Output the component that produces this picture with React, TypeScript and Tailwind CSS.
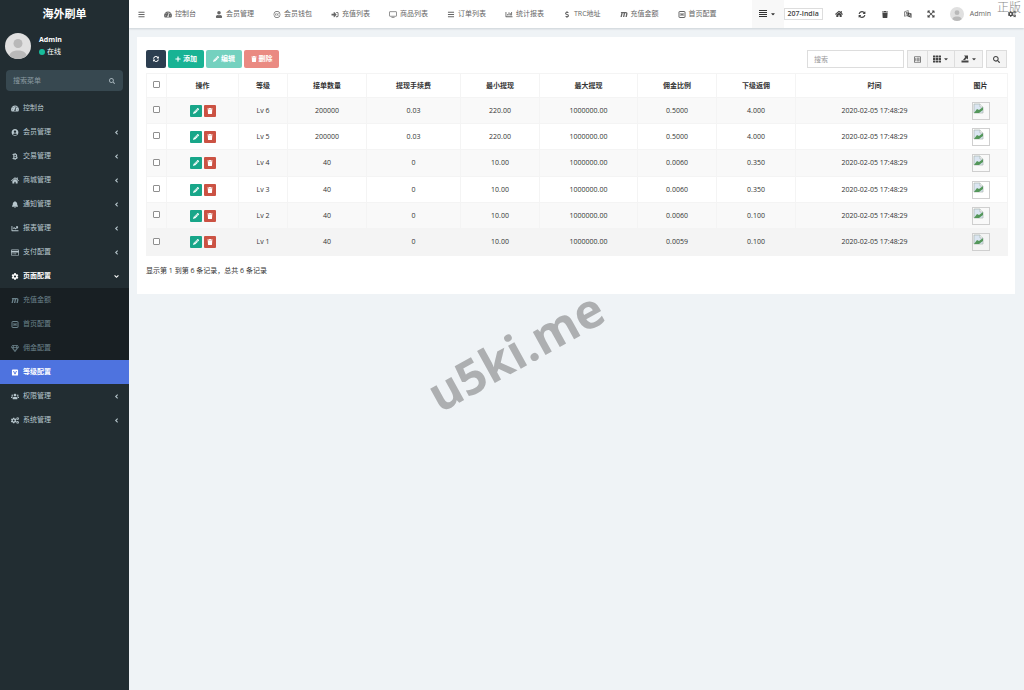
import { useState } from 'react';
import type { ComponentType, ReactNode } from 'react';
import {
  FaAngleDown, FaAngleLeft, FaBars, FaBell, FaBtc, FaCaretDown, FaChartBar,
  FaChartLine, FaCog, FaCogs, FaCreativeCommons, FaDollarSign, FaExpandArrowsAlt, FaHome,
  FaMaxcdn, FaPencilAlt, FaPlus, FaRegCreditCard, FaRegGem, FaRegListAlt, FaSearch,
  FaSignInAlt, FaSyncAlt, FaTachometerAlt, FaTh, FaTrash, FaUser, FaUserCircle, FaUsers,
} from 'react-icons/fa';

type Icon = ComponentType<{ className?: string }>;

const FONT = "font-['Open_Sans','Noto_Sans_CJK_SC',sans-serif]";

function MonitorIcon({ className }: { className?: string }) {
  return (
    <svg viewBox="0 0 18 16" className={className} fill="none" stroke="currentColor" strokeWidth="1.6">
      <rect x="1" y="1.5" width="16" height="10.5" rx="1" />
      <path d="M5.5 14.7h7" />
    </svg>
  );
}

function SquareHIcon({ className }: { className?: string }) {
  return (
    <svg viewBox="0 0 14 14" className={className} fill="none" stroke="currentColor" strokeWidth="2">
      <rect x="1" y="1" width="12" height="12" rx="1" />
      <path d="M5 4v6M9 4v6" />
      <path d="M5 7h4" strokeWidth="1.4" />
    </svg>
  );
}

function SquareVIcon({ className }: { className?: string }) {
  return (
    <svg viewBox="0 0 16 16" className={className} fill="currentColor">
      <path
        fillRule="evenodd"
        d="M3 1h10a2 2 0 0 1 2 2v10a2 2 0 0 1-2 2H3a2 2 0 0 1-2-2V3a2 2 0 0 1 2-2Zm.6 3.6L7 12h2l3.4-7.400h-2.200L8 9.500 5.800 4.600H3.600Z"
      />
    </svg>
  );
}

function JustifyIcon({ className }: { className?: string }) {
  return (
    <svg viewBox="0 0 8 8" className={className} fill="none" stroke="currentColor" strokeWidth="1.2">
      <path d="M0 .5h8M0 2.500h8M0 4.500h8M0 6.500h8" />
    </svg>
  );
}

function LanguageIcon({ className }: { className?: string }) {
  return (
    <svg viewBox="0 0 16 16" className={className} fill="currentColor">
      <path d="M7 4.500 15 7v8.500L7 13z" />
      <path d="M1 3.500 8.500 1v9.500L1 12.500z" fill="none" stroke="currentColor" strokeWidth="1.2" />
      <path d="M3 5.500h4M5 4v2M6.300 6 3.500 9.500M4 7l2.500 2" fill="none" stroke="currentColor" />
      <path d="m9.500 12.500 1.700-5 1.800 6" fill="none" stroke="#fff" />
    </svg>
  );
}

function ExportIcon({ className }: { className?: string }) {
  return (
    <svg viewBox="0 0 16 16" className={className} fill="currentColor">
      <path d="M1 11h14v4H1zM6 1h8v8l-2.500-2.500L8 10H4l4.500-6z" />
    </svg>
  );
}

function Avatar({ className }: { className: string }) {
  return (
    <svg viewBox="0 0 26 26" className={className}>
      <clipPath id="avatar-clip">
        <circle cx="13" cy="13" r="13" />
      </clipPath>
      <g clipPath="url(#avatar-clip)">
        <rect width="26" height="26" fill="#e0e0e0" />
        <circle cx="13" cy="10.500" r="4.500" fill="#b9b9b9" />
        <path d="M3.500 26c0-6 4-8.500 9.500-8.500s9.500 2.500 9.500 8.500z" fill="#b9b9b9" />
      </g>
    </svg>
  );
}

// 图片加载失败占位图
function BrokenImage() {
  return (
    <svg viewBox="0 0 18 18" className="mx-auto block size-[18px]" role="img" aria-label="图片">
      <rect x=".5" y=".5" width="17" height="17" fill="none" stroke="#cfcfcf" />
      <path d="M2 2h6l3 3v6H2z" fill="#dbe6f2" stroke="#a9b4b0" strokeWidth=".7" />
      <path d="M2 11 5 7l2 1 4-3v3l-4 3z" fill="#54975a" />
      <path d="M8 2v3h3" fill="#fff" stroke="#a9b4b0" strokeWidth=".7" />
    </svg>
  );
}

const NAV_ITEMS: { label: string; icon: Icon }[] = [
  { label: '控制台', icon: FaTachometerAlt },
  { label: '会员管理', icon: FaUser },
  { label: '会员钱包', icon: FaCreativeCommons },
  { label: '充值列表', icon: FaSignInAlt },
  { label: '商品列表', icon: MonitorIcon },
  { label: '订单列表', icon: FaBars },
  { label: '统计报表', icon: FaChartBar },
  { label: 'TRC地址', icon: FaDollarSign },
  { label: '充值金额', icon: FaMaxcdn },
  { label: '首页配置', icon: SquareHIcon },
];

interface MenuItem {
  label: string;
  icon: Icon;
  arrow?: boolean;
  open?: boolean;
  active?: boolean;
  children?: MenuItem[];
}

const MENU: MenuItem[] = [
  { label: '控制台', icon: FaTachometerAlt },
  { label: '会员管理', icon: FaUserCircle, arrow: true },
  { label: '交易管理', icon: FaBtc, arrow: true },
  { label: '商城管理', icon: FaHome, arrow: true },
  { label: '通知管理', icon: FaBell, arrow: true },
  { label: '报表管理', icon: FaChartLine, arrow: true },
  { label: '支付配置', icon: FaRegCreditCard, arrow: true },
  {
    label: '页面配置',
    icon: FaCog,
    open: true,
    children: [
      { label: '充值金额', icon: FaMaxcdn },
      { label: '首页配置', icon: SquareHIcon },
      { label: '佣金配置', icon: FaRegGem },
      { label: '等级配置', icon: SquareVIcon, active: true },
    ],
  },
  { label: '权限管理', icon: FaUsers, arrow: true },
  { label: '系统管理', icon: FaCogs, arrow: true },
];

const COLUMNS = [
  { title: '操作', width: 'w-[72px]' },
  { title: '等级', width: 'w-[49px]' },
  { title: '接单数量', width: 'w-[79px]' },
  { title: '提现手续费', width: 'w-[94px]' },
  { title: '最小提现', width: 'w-[79px]' },
  { title: '最大提现', width: 'w-[98px]' },
  { title: '佣金比例', width: 'w-[79px]' },
  { title: '下级返佣', width: 'w-[79px]' },
  { title: '时间', width: 'w-[158px]' },
  { title: '图片', width: 'w-[54px]' },
];

const ROWS = [
  ['Lv 6', '200000', '0.03', '220.00', '1000000.00', '0.5000', '4.000', '2020-02-05 17:48:29'],
  ['Lv 5', '200000', '0.03', '220.00', '1000000.00', '0.5000', '4.000', '2020-02-05 17:48:29'],
  ['Lv 4', '40', '0', '10.00', '1000000.00', '0.0060', '0.350', '2020-02-05 17:48:29'],
  ['Lv 3', '40', '0', '10.00', '1000000.00', '0.0060', '0.350', '2020-02-05 17:48:29'],
  ['Lv 2', '40', '0', '10.00', '1000000.00', '0.0060', '0.100', '2020-02-05 17:48:29'],
  ['Lv 1', '40', '0', '10.00', '1000000.00', '0.0059', '0.100', '2020-02-05 17:48:29'],
];

function MenuLink({ item, child = false }: { item: MenuItem; child?: boolean }) {
  const ItemIcon = item.icon;
  let color = 'text-[#b8c7ce]';
  if (child) color = 'text-[#6b828b]';
  if (item.open) color = 'font-semibold text-white';
  if (item.active) color = 'bg-[#4e73df] font-semibold text-white';

  return (
    <a href="#" className={`flex h-6 items-center pr-[9px] pl-[11px] ${color}`}>
      <ItemIcon className="mr-1 h-[7px] w-2 shrink-0" />
      <span className="flex-1">{item.label}</span>
      {item.arrow && <FaAngleLeft className="size-[7px]" />}
      {item.open && <FaAngleDown className="size-[7px]" />}
    </a>
  );
}

function Sidebar() {
  return (
    <aside className="w-[129px] shrink-0 bg-[#222d32]">
      <a href="#" className="flex h-7 items-center justify-center text-[11px] font-bold text-white">
        海外刷单
      </a>
      <div className="flex h-9 items-center gap-2 pl-[5px] text-white">
        <Avatar className="size-[26px]" />
        <div className="leading-3">
          <p className="font-bold">Admin</p>
          <p className="flex items-center gap-[2px]">
            <span className="size-[6px] rounded-full bg-[#18bc9c]" />
            在线
          </p>
        </div>
      </div>
      <form className="mx-[6px] mt-[6px] mb-[5px] flex h-[21px] items-center rounded-sm bg-[#374850] pr-2 pl-[7px]">
        <input
          type="text"
          aria-label="搜索菜单"
          placeholder="搜索菜单"
          className="min-w-0 flex-1 text-[#b8c7ce] outline-none placeholder:text-[#8b9aa1]"
        />
        <button type="button" aria-label="搜索">
          <FaSearch className="size-[6px] text-[#a3b1b8]" />
        </button>
      </form>
      <nav>
        {MENU.map((item) => (
          <div key={item.label}>
            <MenuLink item={item} />
            {item.children && (
              <div className="bg-[#181f23]">
                {item.children.map((sub) => (
                  <MenuLink key={sub.label} item={sub} child />
                ))}
              </div>
            )}
          </div>
        ))}
      </nav>
    </aside>
  );
}

function TopBar() {
  return (
    <header className="flex h-7 items-center bg-white text-[#666] shadow-[0_1px_2px_rgba(0,21,41,0.15)]">
      <button type="button" aria-label="切换菜单" className="mr-[9px] pl-[9px]">
        <FaBars className="size-[7px]" />
      </button>
      <nav className="flex flex-1">
        {NAV_ITEMS.map(({ label, icon: NavIcon }) => (
          <a key={label} href="#" className="flex items-center gap-[2px] px-[9px] whitespace-nowrap">
            <NavIcon className="h-[7px] w-[10px]" />
            {label}
          </a>
        ))}
      </nav>
      <div className="flex h-full items-center text-[#444]">
        <button type="button" aria-label="标签列表" className="flex h-full w-8 items-center justify-center gap-[3px] bg-[#f8f8f8] text-[#333]">
          <JustifyIcon className="size-2" />
          <FaCaretDown className="size-[6px]" />
        </button>
        <a href="#" className="mr-3 border border-[#ddd] px-[3px] leading-[10px] font-semibold">207-India</a>
        <div className="flex items-center gap-[15px]">
          <a href="#" aria-label="首页"><FaHome className="size-2" /></a>
          <a href="#" aria-label="刷新"><FaSyncAlt className="h-[7px] w-2" /></a>
          <a href="#" aria-label="清空缓存"><FaTrash className="h-[7px] w-2" /></a>
          <a href="#" aria-label="语言"><LanguageIcon className="size-2" /></a>
          <a href="#" aria-label="全屏"><FaExpandArrowsAlt className="size-2" /></a>
          <a href="#" className="flex items-center gap-[6px] text-[#666]">
            <Avatar className="size-[14px]" />
            Admin
          </a>
        </div>
        <a href="#" aria-label="设置" className="mr-2 ml-[17px]"><FaCogs className="size-2" /></a>
      </div>
    </header>
  );
}

function ToolButton({ color, label, children }: { color: string; label?: string; children: ReactNode }) {
  return (
    <button type="button" aria-label={label} className={`flex h-[18px] items-center justify-center gap-[2px] rounded-xs font-semibold text-white ${color}`}>
      {children}
    </button>
  );
}

function Toolbar() {
  return (
    <div className="flex items-center justify-between">
      <div className="flex gap-[2px]">
        <ToolButton color="w-5 bg-[#2c3e50]" label="刷新"><FaSyncAlt className="size-[6px]" /></ToolButton>
        <ToolButton color="w-9 bg-[#18b394]"><FaPlus className="size-[6px]" />添加</ToolButton>
        <ToolButton color="w-9 bg-[#74d1bf]"><FaPencilAlt className="size-[6px]" />编辑</ToolButton>
        <ToolButton color="w-[35px] bg-[#ea8a82]"><FaTrash className="size-[6px]" />删除</ToolButton>
      </div>
      <div className="flex items-center">
        <input
          type="text"
          aria-label="搜索"
          placeholder="搜索"
          className="mr-[3px] h-[18px] w-[97px] border border-[#ddd] px-[6px] outline-none placeholder:text-[#999]"
        />
        <div className="mr-[3px] flex h-[18px] divide-x divide-[#ddd] border border-[#ddd] bg-[#f4f4f4] text-[#444]">
          <button type="button" aria-label="切换视图" className="flex w-5 items-center justify-center">
            <FaRegListAlt className="size-[7px]" />
          </button>
          <button type="button" aria-label="列" className="flex w-[27px] items-center justify-center gap-[2px]">
            <FaTh className="size-2" />
            <FaCaretDown className="size-[6px]" />
          </button>
          <button type="button" aria-label="导出" className="flex w-[27px] items-center justify-center gap-[2px]">
            <ExportIcon className="size-2" />
            <FaCaretDown className="size-[6px]" />
          </button>
        </div>
        <button type="button" aria-label="普通搜索" className="flex h-[18px] w-[21px] items-center justify-center border border-[#ddd] bg-[#f4f4f4] text-[#444]">
          <FaSearch className="size-[7px]" />
        </button>
      </div>
    </div>
  );
}

function LevelTable() {
  const [selected, setSelected] = useState<string[]>([]);

  const toggle = (level: string) => {
    setSelected((prev) => (prev.includes(level) ? prev.filter((v) => v !== level) : [...prev, level]));
  };

  const toggleAll = () => {
    setSelected(selected.length === ROWS.length ? [] : ROWS.map((row) => row[0]));
  };

  const checkbox =
    'mx-auto mb-[2px] block size-[7px] appearance-none rounded-[1px] border border-[#8f8f8f] bg-white checked:bg-[#4e73df]';

  return (
    <table className="mt-[5px] w-full table-fixed border-collapse text-center text-[#333]">
      <thead>
        <tr className="h-6">
          <th className="w-5 border border-[#f4f4f4]">
            <input type="checkbox" aria-label="全选" checked={selected.length === ROWS.length} onChange={toggleAll} className={checkbox} />
          </th>
          {COLUMNS.map((col) => (
            <th key={col.title} className={`border border-[#f4f4f4] font-bold ${col.width}`}>{col.title}</th>
          ))}
        </tr>
      </thead>
      <tbody>
        {ROWS.map((row) => (
          <tr key={row[0]} className="h-[26px] odd:bg-[#f9f9f9] last:bg-[#f4f4f4] nth-[3n]:h-[27px]">
            <td className="border border-[#f4f4f4]">
              <input type="checkbox" aria-label={row[0]} checked={selected.includes(row[0])} onChange={() => toggle(row[0])} className={checkbox} />
            </td>
            <td className="border border-[#f4f4f4]">
              <div className="flex justify-center gap-[2px] text-white">
                <button type="button" aria-label="编辑" className="flex size-3 items-center justify-center rounded-[1px] bg-[#18a689]">
                  <FaPencilAlt className="size-[6px]" />
                </button>
                <button type="button" aria-label="删除" className="flex size-3 items-center justify-center rounded-[1px] bg-[#cb5243]">
                  <FaTrash className="size-[6px]" />
                </button>
              </div>
            </td>
            {row.map((value, i) => (
              <td key={i} className="border border-[#f4f4f4]">{value}</td>
            ))}
            <td className="border border-[#f4f4f4]"><BrokenImage /></td>
          </tr>
        ))}
      </tbody>
    </table>
  );
}

export default function App() {
  return (
    <div className={`relative flex min-h-screen overflow-hidden bg-[#eff3f6] text-[7px] leading-[10px] ${FONT}`}>
      <Sidebar />
      <div className="min-w-0 flex-1">
        <TopBar />
        <main className="m-[9px] ml-2 bg-white pt-[13px] pr-2 pb-[18px] pl-[9px]">
          <Toolbar />
          <LevelTable />
          <p className="mt-[10px] text-[#333]">显示第 1 到第 6 条记录，总共 6 条记录</p>
        </main>
      </div>

      {/* 水印 */}
      <div className="pointer-events-none absolute top-[327px] left-[419px] -rotate-[29deg] text-5xl leading-[48px] font-bold text-[#adafb1]">
        u5ki.me
      </div>
      <div className="pointer-events-none absolute top-0 right-[3px] text-[12px] leading-4 font-light text-[#888]">正版</div>
    </div>
  );
}
